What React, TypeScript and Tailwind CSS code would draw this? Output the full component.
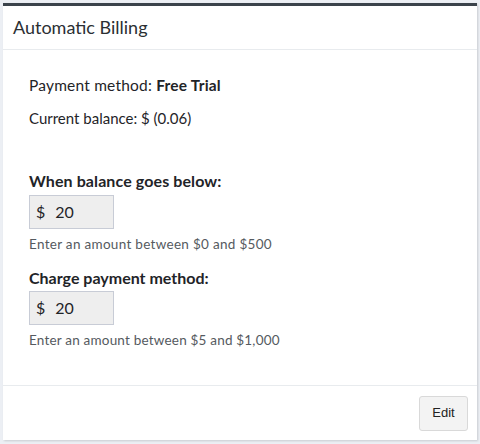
export default function App() {
  const font = { fontFamily: 'Lato, "Open Sans", sans-serif' };
  return (
    <div className="w-[480px] h-[444px] bg-[#eceff4] pt-[3px] pl-[3px]" style={font}>
      <div className="w-[474px] h-[437px] bg-white border-t-[3px] border-[#3b434b] shadow-[1px_1px_2px_rgba(0,0,0,0.15)] flex flex-col">
        <div className="h-[44px] border-b border-[#e8ebee] flex items-center pl-[10px]">
          <span className="text-[18px] text-[#2b2f33]">Automatic Billing</span>
        </div>
        <div className="flex-1 pl-[26px] pt-[25px] text-[#1f2428]">
          <div className="text-[15.5px] leading-[20px] tracking-[0.2px]">
            Payment method: <span className="font-bold">Free Trial</span>
          </div>
          <div className="text-[15px] leading-[20px] mt-[13px]">Current balance: $ (0.06)</div>
          <div className="text-[16px] leading-[20px] font-bold mt-[43px] tracking-[0.1px]">When balance goes below:</div>
          <div className="mt-[4px] w-[85px] h-[34px] bg-[#eeeeee] border border-[#c8ccd6] flex items-center pl-[6px] text-[16px]">
            <span>$</span>
            <span className="ml-[10px]">20</span>
          </div>
          <div className="text-[13.5px] text-[#555a60] mt-[6px] leading-[18px] tracking-[0.3px]">Enter an amount between $0 and $500</div>
          <div className="text-[16px] leading-[20px] font-bold mt-[15px]">Charge payment method:</div>
          <div className="mt-[3px] w-[85px] h-[34px] bg-[#eeeeee] border border-[#c8ccd6] flex items-center pl-[6px] text-[16px]">
            <span>$</span>
            <span className="ml-[10px]">20</span>
          </div>
          <div className="text-[13.5px] text-[#555a60] mt-[6px] leading-[18px] tracking-[0.2px]">Enter an amount between $5 and $1,000</div>
        </div>
        <div className="h-[55px] border-t border-[#e8ebee] flex items-center justify-end pr-[9px]">
          <button className="w-[49px] h-[35px] bg-[#f3f3f3] border border-[#d9d9d9] rounded-[3px] text-[13px] text-[#222]" style={{ fontFamily: '"Liberation Sans", Arial, sans-serif' }}>
            Edit
          </button>
        </div>
      </div>
    </div>
  );
}
